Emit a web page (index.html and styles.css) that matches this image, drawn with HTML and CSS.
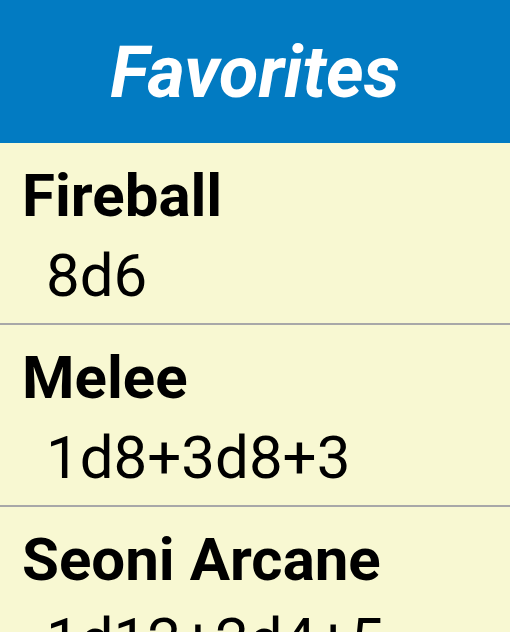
FILE: index.html
```html
<!DOCTYPE html>
<html>
<head>
<meta charset="utf-8">
<link rel="stylesheet" href="styles.css">
</head>
<body>
<header class="header"><h1 class="header-title">Favorites</h1></header>
<ul class="list">
  <li class="item"><div class="item-title">Fireball</div><div class="item-sub">8d6</div></li>
  <li class="item"><div class="item-title">Melee</div><div class="item-sub">1d8+3d8+3</div></li>
  <li class="item"><div class="item-title">Seoni Arcane</div><div class="item-sub">1d12+2d4+5</div></li>
</ul>
</body>
</html>
```
FILE: styles.css
```css
html, body {
  margin: 0;
  padding: 0;
  background: #f8f8d2;
  font-family: Roboto, "Liberation Sans", sans-serif;
  overflow: hidden;
}
.header {
  height: 143px;
  background: #027bc2;
  display: flex;
  align-items: flex-start;
  justify-content: center;
}
.header-title {
  margin: 0;
  padding-top: 31px;
  font-size: 72px;
  line-height: 84px;
  font-weight: 700;
  font-style: italic;
  color: #ffffff;
}
.list {
  list-style: none;
  margin: 0;
  padding: 0;
}
.item {
  height: 182px;
  box-sizing: border-box;
  padding: 18px 0 12px 22px;
  border-bottom: 2px solid #a8a8a8;
  color: #000;
}
.item-title {
  font-size: 60px;
  line-height: 70px;
  font-weight: 700;
}
.item-sub {
  margin-top: 10px;
  padding-left: 24px;
  font-size: 60px;
  line-height: 70px;
  font-weight: 400;
}
```
